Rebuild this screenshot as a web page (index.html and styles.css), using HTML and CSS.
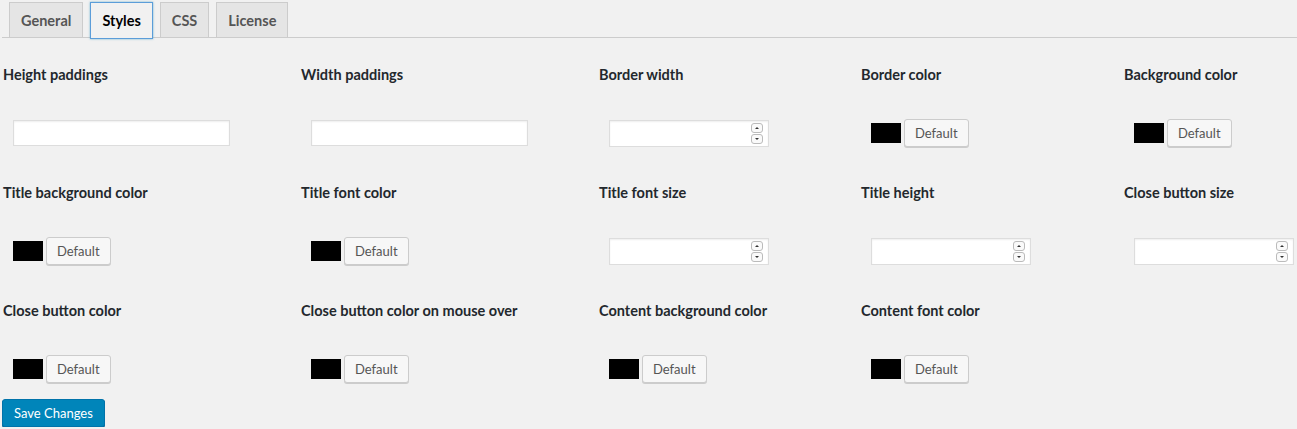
FILE: index.html
```html
<!DOCTYPE html>
<html lang="en">
<head>
 <meta charset="UTF-8">
 <meta name="viewport" content="width=device-width, initial-scale=1.0">
 <title>Styles</title>
 <link rel="stylesheet" href="styles.css">
</head>
<body>
 <div class="wrap">
   <div class="tabs">
     <a class="tab" href="#">General</a>
     <a class="tab active" href="#">Styles</a>
     <a class="tab" href="#">CSS</a>
     <a class="tab" href="#">License</a>
   </div>

   <form class="fields">
     <div class="field">
       <label class="label">Height paddings</label>
       <div class="control"><input class="text" type="text"></div>
     </div>
     <div class="field">
       <label class="label">Width paddings</label>
       <div class="control"><input class="text" type="text"></div>
     </div>
     <div class="field">
       <label class="label">Border width</label>
       <div class="control"><div class="number"><input type="text"><span class="spin"><i class="up"></i><i class="down"></i></span></div></div>
     </div>
     <div class="field">
       <label class="label">Border color</label>
       <div class="control"><span class="swatch"></span><button class="button" type="button">Default</button></div>
     </div>
     <div class="field">
       <label class="label">Background color</label>
       <div class="control"><span class="swatch"></span><button class="button" type="button">Default</button></div>
     </div>

     <div class="field">
       <label class="label">Title background color</label>
       <div class="control"><span class="swatch"></span><button class="button" type="button">Default</button></div>
     </div>
     <div class="field">
       <label class="label">Title font color</label>
       <div class="control"><span class="swatch"></span><button class="button" type="button">Default</button></div>
     </div>
     <div class="field">
       <label class="label">Title font size</label>
       <div class="control"><div class="number"><input type="text"><span class="spin"><i class="up"></i><i class="down"></i></span></div></div>
     </div>
     <div class="field">
       <label class="label">Title height</label>
       <div class="control"><div class="number"><input type="text"><span class="spin"><i class="up"></i><i class="down"></i></span></div></div>
     </div>
     <div class="field">
       <label class="label">Close button size</label>
       <div class="control"><div class="number"><input type="text"><span class="spin"><i class="up"></i><i class="down"></i></span></div></div>
     </div>

     <div class="field">
       <label class="label">Close button color</label>
       <div class="control"><span class="swatch"></span><button class="button" type="button">Default</button></div>
     </div>
     <div class="field">
       <label class="label">Close button color on mouse over</label>
       <div class="control"><span class="swatch"></span><button class="button" type="button">Default</button></div>
     </div>
     <div class="field">
       <label class="label">Content background color</label>
       <div class="control"><span class="swatch"></span><button class="button" type="button">Default</button></div>
     </div>
     <div class="field">
       <label class="label">Content font color</label>
       <div class="control"><span class="swatch"></span><button class="button" type="button">Default</button></div>
     </div>
   </form>

   <button class="save" type="button">Save Changes</button>
 </div>
</body>
</html>
```

FILE: styles.css
```css
html, body {
  margin: 0;
  background-color: #f1f1f1;
}
body {
  font-family: Lato, "Open Sans", sans-serif;
  color: #23282d;
  font-size: 13px;
}
.wrap {
  padding: 2px 0 0 2px;
}
.tabs {
  display: flex;
  padding-left: 7px;
  border-bottom: 1px solid #ccc;
  height: 35px;
}
.tab {
  display: flex;
  align-items: center;
  height: 34px;
  padding: 0 11px;
  margin-right: 7px;
  border: 1px solid #ccc;
  border-bottom: none;
  background-color: #e5e5e5;
  color: #555;
  font-size: 14.5px;
  font-weight: bold;
  text-decoration: none;
}
.tab.active {
  background-color: #f1f1f1;
  color: #000;
  border: 1px solid #5b9dd9;
  height: 35px;
  box-shadow: 0 0 2px rgba(30, 140, 190, 0.6);
}
.fields {
  display: grid;
  grid-template-columns: 298px 298px 262px 263px 1fr;
  row-gap: 36px;
  margin: 27px 0 0 1px;
}
.label {
  display: block;
  font-size: 14.5px;
  font-weight: bold;
  line-height: 20px;
}
.control {
  display: flex;
  align-items: center;
  height: 28px;
  margin-top: 34px;
  padding-left: 10px;
}
.text {
  width: 217px;
  height: 26px;
  box-sizing: border-box;
  border: 1px solid #ddd;
  background-color: #fff;
  box-shadow: inset 0 1px 2px rgba(0, 0, 0, 0.07);
  outline: none;
}
.number {
  position: relative;
  width: 160px;
  height: 27px;
}
.number input {
  width: 100%;
  height: 100%;
  box-sizing: border-box;
  border: 1px solid #ddd;
  background-color: #fff;
  box-shadow: inset 0 1px 2px rgba(0, 0, 0, 0.07);
  outline: none;
}
.spin {
  position: absolute;
  right: 6px;
  top: 3px;
  display: flex;
  flex-direction: column;
  gap: 1px;
}
.spin i {
  position: relative;
  width: 10px;
  height: 8px;
  border: 1px solid #bbb;
  border-radius: 3px;
  background-color: #fafafa;
}
.spin i::after {
  content: "";
  position: absolute;
  left: 3px;
  border-left: 2px solid transparent;
  border-right: 2px solid transparent;
}
.spin .up::after {
  top: 3px;
  border-bottom: 2px solid #333;
}
.spin .down::after {
  top: 3px;
  border-top: 2px solid #333;
}
.swatch {
  width: 30px;
  height: 20px;
  background-color: #000;
  margin-right: 3px;
}
.button {
  height: 28px;
  padding: 0 10px;
  border: 1px solid #ccc;
  border-radius: 3px;
  background-color: #f7f7f7;
  box-shadow: 0 1px 0 #ccc;
  color: #555;
  font-family: inherit;
  font-size: 13px;
  cursor: pointer;
}
.save {
  display: block;
  margin-top: 16px;
  height: 28px;
  padding: 0 11px;
  border: 1px solid #0073aa;
  border-radius: 3px;
  background-color: #0085ba;
  box-shadow: 0 1px 0 #006799;
  color: #fff;
  font-family: inherit;
  font-size: 13px;
  cursor: pointer;
}
```
